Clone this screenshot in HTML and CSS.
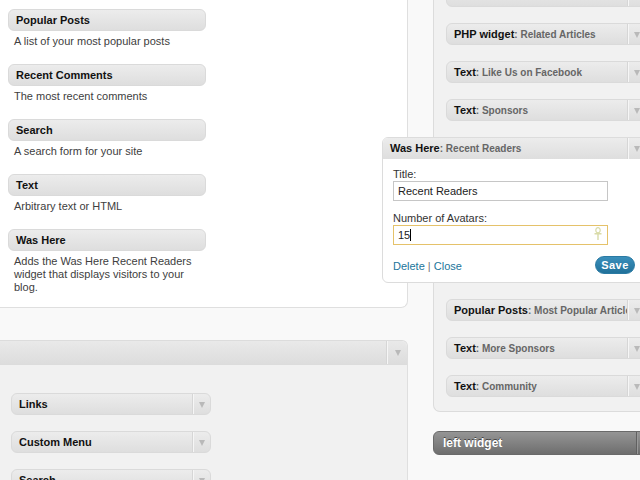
FILE: index.html
```html
<!DOCTYPE html>
<html>
<head>
<meta charset="utf-8">
<title>Widgets</title>
<link rel="stylesheet" href="styles.css">
</head>
<body>
<div class="page">
  <div class="left-col">
    <div class="avail-panel">
      <div class="avail-item">
        <div class="wtop"><h4 class="wtitle">Popular Posts</h4></div>
        <p class="wdesc">A list of your most popular posts</p>
      </div>
      <div class="avail-item">
        <div class="wtop"><h4 class="wtitle">Recent Comments</h4></div>
        <p class="wdesc">The most recent comments</p>
      </div>
      <div class="avail-item">
        <div class="wtop"><h4 class="wtitle">Search</h4></div>
        <p class="wdesc">A search form for your site</p>
      </div>
      <div class="avail-item">
        <div class="wtop"><h4 class="wtitle">Text</h4></div>
        <p class="wdesc">Arbitrary text or HTML</p>
      </div>
      <div class="avail-item">
        <div class="wtop"><h4 class="wtitle">Was Here</h4></div>
        <p class="wdesc">Adds the Was Here Recent Readers widget that displays visitors to your blog.</p>
      </div>
    </div>

    <div class="inactive">
      <div class="inactive-head"><span class="handle head-handle"><i class="arrow"></i></span></div>
      <div class="inactive-body">
        <div class="wtop"><h4 class="wtitle">Links</h4><span class="handle"><i class="arrow"></i></span></div>
        <div class="wtop"><h4 class="wtitle">Custom Menu</h4><span class="handle"><i class="arrow"></i></span></div>
        <div class="wtop"><h4 class="wtitle">Search</h4><span class="handle"><i class="arrow"></i></span></div>
      </div>
    </div>
  </div>

  <div class="right-col">
    <div class="sidebar">
      <div class="wtop"><h4 class="wtitle">&nbsp;</h4><span class="handle"><i class="arrow"></i></span></div>
      <div class="wtop"><h4 class="wtitle">PHP widget<span class="sub">: Related Articles</span></h4><span class="handle"><i class="arrow"></i></span></div>
      <div class="wtop"><h4 class="wtitle">Text<span class="sub">: Like Us on Facebook</span></h4><span class="handle"><i class="arrow"></i></span></div>
      <div class="wtop"><h4 class="wtitle">Text<span class="sub">: Sponsors</span></h4><span class="handle"><i class="arrow"></i></span></div>

      <div class="widget-open">
        <div class="wtop open-top"><h4 class="wtitle">Was Here<span class="sub">: Recent Readers</span></h4><span class="handle"><i class="arrow"></i></span></div>
        <div class="wbody">
          <label class="flabel">Title:</label>
          <input class="field" type="text" value="Recent Readers">
          <label class="flabel">Number of Avatars:</label>
          <div class="field-wrap">
            <input class="field focus" type="text" value="15">
            <span class="caret"></span>
            <svg class="ankh" width="8" height="13" viewBox="0 0 8 13"><ellipse cx="4" cy="3.3" rx="2.2" ry="2.6" fill="none" stroke="#d9dba8" stroke-width="1.2"/><path d="M0.5 6.8H7.5M4 6V13" stroke="#d9dba8" stroke-width="1.4" fill="none"/></svg>
          </div>
          <div class="wactions">
            <div class="links"><a href="#" class="lnk">Delete</a> <span class="sep">|</span> <a href="#" class="lnk">Close</a></div>
            <button class="save" type="button">Save</button>
          </div>
        </div>
      </div>

      <div class="wtop"><h4 class="wtitle">Popular Posts<span class="sub">: Most Popular Articles</span></h4><span class="handle"><i class="arrow"></i></span></div>
      <div class="wtop"><h4 class="wtitle">Text<span class="sub">: More Sponsors</span></h4><span class="handle"><i class="arrow"></i></span></div>
      <div class="wtop"><h4 class="wtitle">Text<span class="sub">: Community</span></h4><span class="handle"><i class="arrow"></i></span></div>
    </div>
    <div class="sidebar-name"><h3 class="sname">left widget</h3><span class="dark-handle"></span></div>
  </div>
</div>
</body>
</html>
```
FILE: styles.css
```css
html, body {
  margin: 0;
  padding: 0;
  overflow: hidden;
}
body {
  width: 640px;
  height: 480px;
  background: #f9f9f9;
  font-family: "Liberation Sans", Arial, sans-serif;
  font-size: 11px;
  color: #333;
}
.page {
  display: flex;
  align-items: flex-start;
  gap: 25px;
}
.left-col {
  flex: none;
  width: 408px;
  display: flex;
  flex-direction: column;
  gap: 32px;
}
.avail-panel {
  box-sizing: border-box;
  width: 408px;
  height: 308px;
  background: #fff;
  border-right: 1px solid #dfdfdf;
  border-bottom: 1px solid #dfdfdf;
  border-bottom-right-radius: 7px;
  padding: 9px 0 0 8px;
  display: flex;
  flex-direction: column;
  gap: 16px;
}
.avail-item {
  width: 198px;
}
.wtop {
  box-sizing: border-box;
  width: 200px;
  height: 22px;
  border: 1px solid #dadada;
  border-radius: 6px;
  background: linear-gradient(#ececec, #dedede);
  display: flex;
  align-items: stretch;
  overflow: hidden;
  flex: none;
}
.avail-item .wtop {
  width: 198px;
}
.wtitle {
  flex: 1;
  margin: 0;
  padding-left: 7px;
  font-size: 11px;
  font-weight: bold;
  line-height: 20px;
  color: #111;
  white-space: nowrap;
  overflow: hidden;
}
.sub {
  font-size: 10px;
  color: #666;
}
.wdesc {
  margin: 4px 0 0;
  padding: 0 6px;
  line-height: 13px;
  color: #404040;
}
.handle {
  flex: none;
  width: 16px;
  border-left: 1px solid #f6f6f6;
  box-shadow: -1px 0 0 #d6d6d6;
  display: flex;
  align-items: center;
  justify-content: center;
}
.arrow {
  display: block;
  width: 0;
  height: 0;
  border-left: 3.5px solid transparent;
  border-right: 3.5px solid transparent;
  border-top: 6px solid #b9b9b9;
  margin-top: 1px;
}

/* inactive box */
.inactive {
  box-sizing: border-box;
  width: 408px;
  height: 200px;
  background: #f1f1f1;
  border-right: 1px solid #dfdfdf;
  border-top: 1px solid #dcdcdc;
  border-top-right-radius: 6px;
}
.inactive-head {
  height: 23px;
  border-bottom: 1px solid #dcdcdc;
  border-top-right-radius: 6px;
  background: linear-gradient(#e9e9e9, #dddddd);
  display: flex;
  justify-content: flex-end;
}
.head-handle {
  width: 19px;
}
.inactive-body {
  padding: 28px 0 0 11px;
  display: flex;
  flex-direction: column;
  gap: 16px;
}

/* right column */
.right-col {
  flex: none;
  width: 225px;
  margin-top: -27px;
  display: flex;
  flex-direction: column;
  gap: 19px;
}
.sidebar {
  box-sizing: border-box;
  width: 225px;
  background: #f1f1f1;
  border-left: 1px solid #dcdcdc;
  border-bottom: 1px solid #dcdcdc;
  border-bottom-left-radius: 7px;
  padding: 12px 12px 14px 12px;
  display: flex;
  flex-direction: column;
  gap: 16px;
}
.widget-open {
  box-sizing: border-box;
  width: 264px;
  margin-left: -64px;
  border: 1px solid #dcdcdc;
  border-radius: 6px;
  background: #fff;
  overflow: hidden;
}
.open-top {
  width: auto;
  height: 21px;
  border: none;
  border-radius: 0;
}
.wbody {
  padding: 9px 10px 7px 10px;
  display: flex;
  flex-direction: column;
}
.flabel {
  display: block;
  line-height: 13px;
  font-size: 11px;
  color: #333;
}
.field {
  box-sizing: border-box;
  width: 215px;
  height: 20px;
  margin: 0 0 11px;
  padding: 0 0 0 4px;
  border: 1px solid #c6c6c6;
  background: #fff;
  font-family: "Liberation Sans", Arial, sans-serif;
  font-size: 11px;
  color: #222;
  outline: none;
}
.field.focus {
  border-color: #e5c26a;
  margin-bottom: 10px;
}
.field-wrap {
  position: relative;
  width: 215px;
}
.caret {
  position: absolute;
  left: 17px;
  top: 4px;
  width: 1px;
  height: 12px;
  background: #000;
}
.ankh {
  position: absolute;
  right: 6px;
  top: 2px;
}
.wactions {
  height: 20px;
  display: flex;
  align-items: center;
  justify-content: space-between;
}
.links {
  padding-top: 2px;
}
.lnk {
  color: #21759b;
  text-decoration: none;
}
.sep {
  color: #777;
}
.save {
  box-sizing: border-box;
  width: 40px;
  height: 18px;
  padding: 0;
  border: 1px solid #2a7aa3;
  border-radius: 10px;
  background: linear-gradient(#3a8fbb, #21719a);
  color: #fff;
  font-family: "Liberation Sans", Arial, sans-serif;
  font-size: 11px;
  font-weight: bold;
  letter-spacing: 0.5px;
}
.sidebar-name {
  box-sizing: border-box;
  width: 225px;
  height: 24px;
  border: 1px solid #6a6a6a;
  border-radius: 6px 0 0 6px;
  background: linear-gradient(#959595, #6e6e6e);
  display: flex;
}
.sname {
  flex: 1;
  margin: 0;
  padding-left: 9px;
  font-size: 12px;
  font-weight: bold;
  line-height: 22px;
  color: #fff;
  text-shadow: 0 -1px 0 #444;
}
.dark-handle {
  flex: none;
  width: 19px;
  border-left: 1px solid #999;
  box-shadow: -1px 0 0 #606060;
}
```
